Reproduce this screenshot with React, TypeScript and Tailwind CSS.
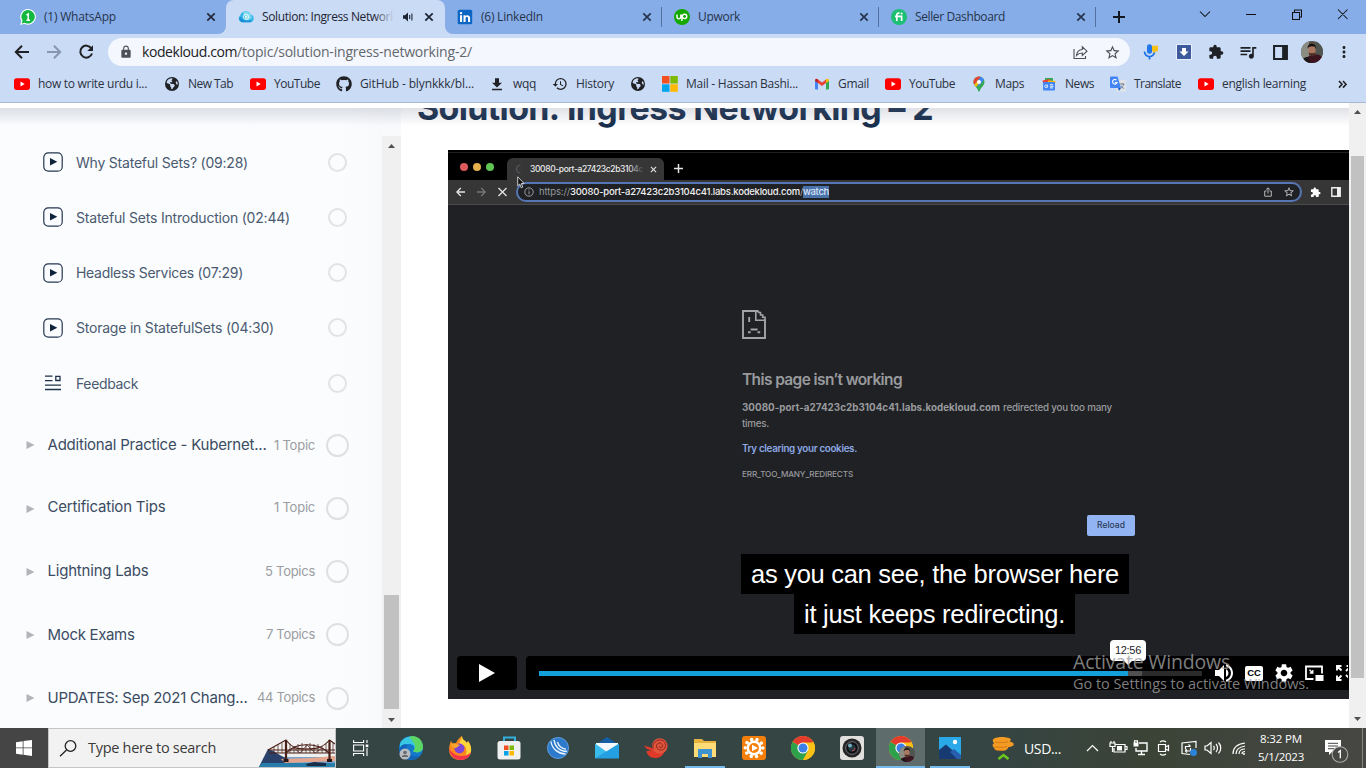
import { useLayoutEffect, useRef, useState } from "react";
import type { ReactNode } from "react";
import { MdExtension, MdHistory, MdLock, MdMoreVert, MdQueueMusic, MdSettings, MdStarOutline, MdVolumeUp } from "react-icons/md";
import { FaEarthAmericas, FaGithub } from "react-icons/fa6";

/* Single line of text whose tracking is adjusted so that it spans `w` pixels. */
function Fit({ w, children, className = "" }: { w: number; children: string; className?: string }) {
  const ref = useRef<HTMLSpanElement>(null);
  const [track, setTrack] = useState(0);
  useLayoutEffect(() => {
    if (ref.current) {
      const natural = ref.current.getBoundingClientRect().width;
      setTrack((w - natural) / children.length);
    }
  }, [w, children]);
  return (
    <span ref={ref} className={`inline-block shrink-0 whitespace-nowrap ${className}`} style={{ letterSpacing: track }}>
      {children}
    </span>
  );
}

/* ---------- browser chrome icons ---------- */

function Cross({ className = "", size = "h-[10px] w-[10px]" }: { className?: string; size?: string }) {
  return (
    <svg className={`shrink-0 ${size} ${className}`} viewBox="0 0 10 10" fill="none" stroke="currentColor" strokeWidth="1.7">
      <path d="M1.3 1.3l7.4 7.4M8.7 1.3L1.3 8.7" />
    </svg>
  );
}

const YouTube = () => (
  <svg className="h-4 w-4" viewBox="0 0 16 16">
    <rect x="0" y="2.3" width="16" height="11.6" rx="2.6" fill="#f00" />
    <path d="M6.5 5.6v5l4.2-2.5z" fill="#fff" />
  </svg>
);

const Download = () => (
  <svg className="h-4 w-4" viewBox="0 0 16 16" fill="#202124">
    <path d="M6 2.3h4v4.4h3L8 11.5 3 6.700h3zM3 12.700h10v1.500H3z" />
  </svg>
);

const Microsoft = () => (
  <svg className="h-4 w-4" viewBox="0 0 16 16">
    <path d="M0 0h7.500v7.500H0z" fill="#f25022" />
    <path d="M8.300 0h7.500v7.500H8.300z" fill="#7fba00" />
    <path d="M0 8.300h7.500v7.500H0z" fill="#00a4ef" />
    <path d="M8.300 8.300h7.500v7.500H8.300z" fill="#ffb900" />
  </svg>
);

const Gmail = () => (
  <svg className="h-4 w-4" viewBox="0 0 16 16">
    <path d="M1 4.300l3 2.200v7H2a1 1 0 01-1-1z" fill="#4285f4" />
    <path d="M12 6.500l3-2.200v8.200a1 1 0 01-1 1h-2z" fill="#34a853" />
    <path d="M4 3.600l4 3 4-3v3.500l-4 3-4-3z" fill="#ea4335" />
    <path d="M1 4.200C1 2.600 2.700 2.200 4 3.200v3.900L1 5z" fill="#c5221f" />
    <path d="M15 4.200c0-1.600-1.700-2-3-1v3.900L15 5z" fill="#fbbc04" />
  </svg>
);

const Maps = () => (
  <svg className="h-4 w-4" viewBox="0 0 16 16">
    <path d="M8 .5A5.500 5.500 0 002.500 6c0 4 3.700 4.700 5 9.500h1c1.300-4.800 5-5.500 5-9.500A5.500 5.500 0 008 .5z" fill="#34a853" />
    <path d="M3.700 2.500L6.500 5 3.300 8.800A5.500 5.500 0 013.700 2.500z" fill="#ea4335" />
    <path d="M8 .5a5.500 5.500 0 00-4.300 2L6.500 5l3.300-4.200z" fill="#ea4335" />
    <path d="M9.800.8a5.500 5.500 0 013.200 3L8 10 3.300 8.800 6.500 5z" fill="#4285f4" />
    <path d="M3.300 8.800L6.500 5l2 2-3.500 4z" fill="#fbbc04" />
    <circle cx="8" cy="6" r="2" fill="#fff" />
  </svg>
);

const News = () => (
  <svg className="h-4 w-4" viewBox="0 0 16 16">
    <path d="M4 2h8v5H4z" fill="#34a853" />
    <path d="M1.500 4.500L9 3l1 4H2z" fill="#ea4335" />
    <path d="M7 4.500l7.500.5-.5 3H7z" fill="#fbbc04" />
    <rect x="2" y="6" width="12" height="8.500" rx="1" fill="#4285f4" />
    <path d="M7 9.200H5.500a1.300 1.300 0 100 2.300c.9 0 1.300-.5 1.300-1.200H5.500M9 8.700h3M9 10.300h3.500M9 11.900h3" stroke="#fff" strokeWidth=".9" fill="none" />
  </svg>
);

const Translate = () => (
  <svg className="h-4 w-4" viewBox="0 0 16 16">
    <rect x="6" y="4" width="10" height="11.500" rx="1" fill="#dfe3e8" />
    <path d="M1 .5h6.500L11 12H1a1 1 0 01-1-1V1.500A1 1 0 011 .5z" fill="#4285f4" />
    <path d="M6.600 4.200a2.300 2.300 0 10.500 2.300H4.900" stroke="#fff" strokeWidth="1.100" fill="none" />
    <path d="M8 12h3l-2 3z" fill="#1a5fd0" />
    <path d="M9.800 8h4.700M12.200 7v1M13.700 8c-.4 2-1.600 3.500-3 4.500M11 9.500c.5 1.300 1.700 2.500 3 3" stroke="#6b7a8c" strokeWidth=".9" fill="none" />
  </svg>
);

const WhatsApp = () => (
  <svg className="h-4 w-4" viewBox="0 0 16 16">
    <path d="M8.200 0a7.800 7.800 0 11-3.800 14.700L.2 16l1.200-4A7.900 7.900 0 018.200 0z" fill="#fff" />
    <path d="M8.200 1.100a6.700 6.700 0 11-3.300 12.600l-3.200.9.900-3A6.700 6.700 0 018.200 1.100z" fill="#12b83f" />
    <path d="M6.500 6.200L8.200 5v6.200M6.400 11.200h3.700" stroke="#fff" strokeWidth="1.500" fill="none" />
  </svg>
);

const KodeKloud = () => (
  <svg className="h-4 w-4" viewBox="0 0 16 16">
    <path d="M4 13.200A3.700 3.700 0 012.300 6.500 5.500 5.500 0 0112.700 5.600 3.900 3.900 0 0112.500 13.200z" fill="#35b5e8" />
    <path d="M5 3.200a5.500 5.500 0 017.700 2.400L14 9 8 12.500z" fill="#7edbef" />
    <path d="M2 7.500c2 3.500 7 5 12 3.500l-1.500 2.200H4A3.700 3.700 0 012 7.500z" fill="#188fd8" />
    <circle cx="8" cy="7.800" r="2.600" fill="none" stroke="#e4f8ff" strokeWidth="1" />
    <circle cx="8" cy="7.800" r="1" fill="#fff" />
  </svg>
);

const LinkedIn = () => (
  <svg className="h-4 w-4" viewBox="0 0 16 16">
    <rect x=".7" y=".8" width="14.500" height="14.500" rx="1.500" fill="#0a66c2" />
    <path d="M3 6.300h2.100v6.600H3zM6.500 6.300h2v1c.9-1.600 4.600-1.700 4.600 1.700v3.900H11V9.500c0-2-2.400-1.800-2.400 0v3.400H6.500z" fill="#fff" />
    <circle cx="4.050" cy="4.100" r="1.200" fill="#fff" />
  </svg>
);

const Upwork = () => (
  <svg className="h-4 w-4" viewBox="0 0 16 16">
    <circle cx="8" cy="8" r="8" fill="#14a800" />
    <path d="M3 5.500v2.300a1.900 1.900 0 003.800 0V5.500c1 2.500 2 4 3.800 4.100a2.200 2.200 0 10-2.200-2.400L7.700 12" fill="none" stroke="#fff" strokeWidth="1.400" />
  </svg>
);

const Fiverr = () => (
  <svg className="h-4 w-4" viewBox="0 0 16 16">
    <circle cx="8" cy="8" r="8" fill="#1dbf73" />
    <path d="M5.800 12V6.200c0-1.700.9-2.200 2.700-2M4 7.300h6.600V12" fill="none" stroke="#fff" strokeWidth="1.700" />
    <circle cx="10.600" cy="4.500" r="1" fill="#fff" />
  </svg>
);

function Avatar({ className }: { className: string }) {
  return (
    <svg className={className} viewBox="0 0 22 22">
      <defs>
        <clipPath id="face"><circle cx="11" cy="11" r="11" /></clipPath>
      </defs>
      <g clipPath="url(#face)">
        <path d="M0 0h22v22H0z" fill="#55544b" />
        <path d="M0 0h8v22H0z" fill="#8b8c82" />
        <path d="M15 0h7v14h-7z" fill="#4f5650" />
        <path d="M3 22c0-5 3-7 7-7 6-3 11-1 12 3v4z" fill="#3c1520" />
        <path d="M1 22c0-4 2-6 6-6l3 6z" fill="#1b1719" />
        <ellipse cx="11" cy="9.500" rx="3.700" ry="5.500" fill="#a87862" />
        <path d="M6.500 7.500c-.5-6.500 9-6.500 8.700.5L14 5.800c-2-.8-4-.8-6 0z" fill="#17120f" />
        <path d="M7.600 11.500c1 1 5.500 1 6.800 0-.4 5-6 5-6.800 0z" fill="#4a2b24" />
      </g>
    </svg>
  );
}

/* ---------- tab strip ---------- */

function Tab({ icon, title, w }: { icon: ReactNode; title: string; w: number }) {
  return (
    <div className="flex h-full w-[217px] shrink-0 items-center pl-[12px]">
      {icon}
      <Fit w={w} className="ml-[8px]">{title}</Fit>
      <Cross className="mr-[9px] ml-auto" />
      <span className="h-5 w-px bg-[#54709f]" />
    </div>
  );
}

function TabStrip() {
  return (
    <div className="flex h-[34px] bg-[#86ade8] text-[12px] text-[#26344c]">
      <div className="flex h-full w-[226px] shrink-0 items-center pl-5">
        <WhatsApp />
        <Fit w={72} className="ml-2">(1) WhatsApp</Fit>
        <Cross className="mr-[10px] ml-auto text-[#222a3a]" />
      </div>
      <div className="relative flex h-full w-[219px] shrink-0 items-center rounded-t-lg bg-[#cadbf5] pl-[12px] text-[#1d2433]">
        <svg className="absolute bottom-0 -left-2 h-2 w-2" viewBox="0 0 8 8"><path d="M8 0v8H0a8 8 0 008-8z" fill="#cadbf5" /></svg>
        <svg className="absolute -right-2 bottom-0 h-2 w-2" viewBox="0 0 8 8"><path d="M0 0v8h8a8 8 0 01-8-8z" fill="#cadbf5" /></svg>
        <KodeKloud />
        <div className="relative ml-2 w-[132px] overflow-hidden">
          <Fit w={134}>Solution: Ingress Network</Fit>
          <span className="absolute inset-y-0 right-0 w-5 bg-gradient-to-r from-transparent to-[#cadbf5]" />
        </div>
        <svg className="ml-[9px] h-[10px] w-[10px]" viewBox="0 0 10 10" fill="#1d2433">
          <path d="M0 3.200h2L5 .5v9L2 6.800H0z" />
          <path d="M6.700 3v4M8.900 1.500v7" stroke="#1d2433" strokeWidth="1.100" />
        </svg>
        <Cross className="ml-[11px]" />
      </div>
      <Tab icon={<LinkedIn />} title="(6) LinkedIn" w={62} />
      <Tab icon={<Upwork />} title="Upwork" w={42} />
      <Tab icon={<Fiverr />} title="Seller Dashboard" w={90} />
      <svg className="mt-[11px] ml-[17px] h-3 w-3" viewBox="0 0 12 12" stroke="#15191f" strokeWidth="2"><path d="M6 0v12M0 6h12" /></svg>
      <svg className="mt-[8px] ml-[69px] h-3 w-[160px]" viewBox="0 0 160 12" fill="none" stroke="#111" strokeWidth="1.050">
        <path d="M6 3.500l5 5 5-5M52 6.500h10M98.500 4.500h7v7h-7zM100.500 4.500v-2.500h7v7h-2.300M144 1.500l9.500 9.500M153.500 1.500L144 11" />
      </svg>
    </div>
  );
}

/* ---------- address row ---------- */

function AddressRow() {
  return (
    <div className="flex h-9 items-center bg-[#cadbf5]">
      <svg className="ml-[14px] h-4 w-[82px] shrink-0" viewBox="0 0 82 16" fill="none" strokeWidth="2">
        <path d="M15 8H2M8 1.800L1.800 8 8 14.200" stroke="#202124" />
        <path d="M33 8h13M40 1.800L46.200 8 40 14.200" stroke="#8795ae" />
        <path d="M77.300 4.300A6 6 0 1078 9.500" stroke="#202124" />
        <path d="M79 1.300v5.700h-5.700z" fill="#202124" />
      </svg>
      <div className="ml-[12px] flex h-7 w-[1022px] shrink-0 items-center rounded-full bg-[#f4f7fd]">
        <MdLock className="ml-[11px] h-[14px] w-[14px] text-[#4d5156]" />
        <div className="mb-[2px] ml-[9px] flex text-[14px]">
          <Fit w={95} className="text-[#202124]">kodekloud.com</Fit>
          <Fit w={235} className="text-[#63676d]">/topic/solution-ingress-networking-2/</Fit>
        </div>
        <svg className="mr-[16px] ml-auto h-[15px] w-[15px]" viewBox="0 0 15 15" fill="none" stroke="#4d5156" strokeWidth="1.100">
          <path d="M1 4v9.500h11.500V11" />
          <path d="M3.500 10.500C4 6.500 6 4.700 9.300 4.500V1.800L14 6.200l-4.700 4.300V8C6.500 8 5 8.700 3.500 10.500z" />
        </svg>
        <MdStarOutline className="mr-[9px] h-[17px] w-[17px] text-[#4d5156]" />
      </div>
      <svg className="ml-[13px] h-4 w-4 shrink-0" viewBox="0 0 16 16">
        <path d="M1.500 7.500a5 5 0 0010 0M6.500 12.500v3" fill="none" stroke="#1a73e8" strokeWidth="1.700" />
        <rect x="4" y=".2" width="5" height="9.600" rx="2.500" fill="#2277ea" />
        <path d="M9 1.800h6v5.500h-2.200L10.500 9.500V7.300H9z" fill="#fbc117" />
      </svg>
      <svg className="ml-[17px] h-4 w-4 shrink-0" viewBox="0 0 16 16">
        <rect x=".5" y=".5" width="15" height="15" fill="#3d5a9c" stroke="#e9effa" />
        <path d="M6 4h4v3.500h2.500L8 12 3.500 7.500H6z" fill="#fff" />
      </svg>
      <MdExtension className="ml-4 h-4 w-4 shrink-0 text-[#1d2025]" />
      <MdQueueMusic className="ml-[14px] h-5 w-5 shrink-0 text-[#1d2025]" />
      <svg className="ml-[15px] h-[15px] w-[15px] shrink-0" viewBox="0 0 14 14"><path d="M1 1h12v12H1z" fill="none" stroke="#1d2025" strokeWidth="1.900" /><path d="M8.500 1H13v12H8.500z" fill="#1d2025" /></svg>
      <Avatar className="ml-[13px] h-[22px] w-[22px] shrink-0" />
      <MdMoreVert className="ml-[12px] h-[18px] w-[18px] shrink-0 text-[#1d2025]" />
    </div>
  );
}

/* ---------- bookmarks ---------- */

type Mark = { icon: ReactNode; label?: string; w?: number; cell: string };
const globe = <FaEarthAmericas className="h-[14px] w-[14px] text-[#202124]" />;
const marks: Mark[] = [
  { icon: <YouTube />, label: "how to write urdu i...", w: 109, cell: "w-[150px]" },
  { icon: globe, label: "New Tab", w: 45, cell: "w-[86px]" },
  { icon: <YouTube />, label: "YouTube", w: 46, cell: "w-[86px]" },
  { icon: <FaGithub className="h-4 w-4 text-[#202124]" />, label: "GitHub - blynkkk/bl...", w: 114, cell: "w-[153px]" },
  { icon: <Download />, label: "wqq", w: 23, cell: "w-[63px]" },
  { icon: <MdHistory className="h-4 w-4 text-[#202124]" />, label: "History", w: 38, cell: "w-[78px]" },
  { icon: globe, cell: "w-[32px]" },
  { icon: <Microsoft />, label: "Mail - Hassan Bashi...", w: 112, cell: "w-[152px]" },
  { icon: <Gmail />, label: "Gmail", w: 31, cell: "w-[71px]" },
  { icon: <YouTube />, label: "YouTube", w: 46, cell: "w-[86px]" },
  { icon: <Maps />, label: "Maps", w: 29, cell: "w-[70px]" },
  { icon: <News />, label: "News", w: 29, cell: "w-[69px]" },
  { icon: <Translate />, label: "Translate", w: 47, cell: "w-[88px]" },
  { icon: <YouTube />, label: "english learning", w: 84, cell: "w-[140px]" },
];

function Bookmarks() {
  return (
    <div className="flex h-[33px] items-start border-b border-[#a9b8d3] bg-[#cadbf5] pt-[6px] pl-[14px] text-[12px] text-[#2a3242]">
      {marks.map((m, i) => (
        <div key={i} className={`flex h-4 shrink-0 items-center ${m.cell}`}>
          <span className="flex w-4 shrink-0 justify-center">{m.icon}</span>
          {m.label && <Fit w={m.w ?? 0} className="ml-2">{m.label}</Fit>}
        </div>
      ))}
      <svg className="mt-[4px] h-[9px] w-[9px]" viewBox="0 0 9 9" fill="none" stroke="#202124" strokeWidth="1.600"><path d="M1 1l3 3.300-3 3.300M5 1l3 3.300-3 3.300" /></svg>
    </div>
  );
}

/* ---------- course sidebar ---------- */

const lessons = [
  { label: "Why Stateful Sets? (09:28)", w: 172 },
  { label: "Stateful Sets Introduction (02:44)", w: 214 },
  { label: "Headless Services (07:29)", w: 167 },
  { label: "Storage in StatefulSets (04:30)", w: 198 },
  { label: "Feedback", w: 62, form: true },
];
const sections = [
  { label: "Additional Practice - Kubernet...", w: 219, count: "1 Topic", cw: 41, lift: "pb-0" },
  { label: "Certification Tips", w: 118, count: "1 Topic", cw: 41, lift: "pb-[2px]" },
  { label: "Lightning Labs", w: 101, count: "5 Topics", cw: 50, lift: "pb-0" },
  { label: "Mock Exams", w: 87, count: "7 Topics", cw: 49, lift: "pb-0" },
  { label: "UPDATES: Sep 2021 Chang...", w: 200, count: "44 Topics", cw: 58, lift: "pb-0" },
];

function Sidebar() {
  return (
    <aside className="flex h-full w-[401px] shrink-0 bg-[#f8fafc] font-['Inter',sans-serif]">
      <div className="w-[382px] shrink-0 overflow-hidden bg-linear-to-r from-[#fafcfe] from-90% to-[#f8f9fb] pt-[26.500px]">
        {lessons.map((l) => (
          <div key={l.label} className="flex h-[55.250px] items-center pl-[43px] text-[14px] text-[#4a5a70]">
            {l.form ? (
              <svg className="h-5 w-5" viewBox="0 0 20 20" fill="none" stroke="#1d3049" strokeWidth="1.300"><path d="M2 3.200h7.500M2 7.700h7.500M2 12.200h16M2 16.500h16M12.800 3.300h4.200v4.200h-4.200z" /></svg>
            ) : (
              <svg className="h-5 w-5" viewBox="0 0 20 20"><rect x=".8" y=".8" width="18.400" height="18.400" rx="4.500" fill="none" stroke="#253750" strokeWidth="1.200" /><path d="M7 6l7.300 3.800L7 13.600z" fill="#10233d" /></svg>
            )}
            <Fit w={l.w} className="ml-[13px]">{l.label}</Fit>
            <span className="mr-[35px] ml-auto h-[19px] w-[19px] rounded-full border-2 border-[#e1e3e5]" />
          </div>
        ))}
        <div className="pt-[3px]">
          {sections.map((s) => (
            <div key={s.label} className="flex h-[63.200px] items-center pl-[26px] text-[15px] text-[#3a4b62]">
              <svg className="h-[10px] w-[9px]" viewBox="0 0 9 10"><path d="M.5 1l8 4-8 4z" fill="#b2b4b7" /></svg>
              <Fit w={s.w} className={`ml-[12.500px] ${s.lift}`}>{s.label}</Fit>
              <Fit w={s.cw} className={`ml-auto text-[13px] text-[#9b9da1] ${s.lift}`}>{s.count}</Fit>
              <span className="mr-[33px] ml-[11px] h-[23px] w-[23px] shrink-0 rounded-full border-2 border-[#dfe0e2]" />
            </div>
          ))}
        </div>
      </div>
      <div className="mt-7 flex w-[19px] flex-col items-center bg-[#f0f0f0]">
        <svg className="mt-[8px] h-[4px] w-[7px]" viewBox="0 0 7 4"><path d="M0 4L3.500 0 7 4z" fill="#505050" /></svg>
        <div className="mt-auto h-[114px] w-[15px] bg-[#c1c1c1]" />
        <svg className="mt-[9px] mb-[6px] h-[4px] w-[7px]" viewBox="0 0 7 4"><path d="M0 0h7L3.500 4z" fill="#505050" /></svg>
      </div>
    </aside>
  );
}

/* ---------- video ---------- */

function VideoBrowser() {
  return (
    <>
      <div className="h-[2px] bg-black" />
      <div className="flex h-7 border-t border-[#1f1f1f] bg-black text-[#ddd]">
        <div className="mt-[10px] ml-[12px] flex gap-[5px]">
          <span className="h-2 w-2 rounded-full bg-[#dd5a5c]" />
          <span className="h-2 w-2 rounded-full bg-[#e5b14f]" />
          <span className="h-2 w-2 rounded-full bg-[#5fc454]" />
        </div>
        <div className="mt-[5px] ml-[13px] flex h-[22px] w-[157px] items-center rounded-t-md bg-[#363637]">
          <svg className="ml-2 h-[10px] w-[10px]" viewBox="0 0 10 10" fill="none" stroke="#5c5c66" strokeWidth="1"><path d="M5.500 1a4 4 0 000 8" /></svg>
          <div className="relative ml-[5px] flex h-[12px] w-[114px] items-center overflow-hidden leading-[12px]">
            <Fit w={113} className="text-[8.500px] font-medium text-[#ececec]">30080-port-a27423c2b3104c</Fit>
            <span className="absolute inset-y-0 right-0 w-4 bg-linear-to-r from-transparent to-[#363637]" />
          </div>
          <Cross className="ml-[6px]" size="h-[7px] w-[7px]" />
        </div>
        <svg className="mt-[11px] ml-[10px] h-[9px] w-[9px]" viewBox="0 0 8 8" stroke="#e5e5e5" strokeWidth="1.300"><path d="M4 0v8M0 4h8" /></svg>
      </div>
      <div className="flex h-[25px] items-center border-b border-[#4b4b4c] bg-[#363637]">
        <svg className="ml-[8px] h-[10px] w-[52px]" viewBox="0 0 52 10" fill="none" strokeWidth="1.300">
          <path d="M9 5H1M4.800 1L.8 5l4 4" stroke="#e5e5e5" />
          <path d="M21 5h8M25.200 1l4 4-4 4" stroke="#777" />
          <path d="M42.500 1l8 8M50.500 1l-8 8" stroke="#e5e5e5" />
        </svg>
        <div className="ml-[8px] flex h-5 w-[786px] shrink-0 items-center rounded-full border-2 border-[#5676b5] bg-[#202124] text-[9.500px]">
          <svg className="ml-[6px] h-[10px] w-[10px]" viewBox="0 0 10 10" fill="none" stroke="#aaa" strokeWidth=".9"><circle cx="5" cy="5" r="4.200" /><path d="M5 4.300v3M5 2.400v1" /></svg>
          <Fit w={31} className="ml-[5px] text-[#96999d]">https://</Fit>
          <Fit w={230} className="font-medium text-[#f0f0f0]">30080-port-a27423c2b3104c41.labs.kodekloud.com</Fit>
          <Fit w={3} className="text-[#aaa]">/</Fit>
          <span className="flex h-[12px] items-center bg-[#4a72ab]"><Fit w={26} className="font-medium text-[#d9e4f5]">watch</Fit></span>
          <svg className="ml-auto h-[10px] w-[8px]" viewBox="0 0 8 10" fill="none" stroke="#b5b5b5"><path d="M2.500 4H.7v5.200h6.600V4H5.500M4 6.500V1M2.200 2.500L4 .8l1.800 1.700" /></svg>
          <MdStarOutline className="mr-[5px] ml-[11px] h-[12px] w-[12px] text-[#c4c4c4]" />
        </div>
        <MdExtension className="ml-[8px] h-[11px] w-[11px] shrink-0 text-white" />
        <svg className="ml-[10px] h-[10px] w-[10px] shrink-0" viewBox="0 0 10 10"><path d="M.8.8h8.400v8.400H.8z" fill="none" stroke="#eee" strokeWidth="1.400" /><path d="M6 .8h3.200v8.400H6z" fill="#eee" /></svg>
      </div>
    </>
  );
}

function ErrorPage() {
  return (
    <div className="ml-[294px] flex w-[393px] flex-col pt-[105px] text-[#989a9d]">
      <svg className="h-[29px] w-6" viewBox="0 0 24 29" fill="none" stroke="#a3a4a6" strokeWidth="1.900">
        <path d="M16.500 1H1v27h22V9.500" />
        <path d="M13.800 1v9.300H24M16.500 1v1.500h2V5h2.200v2.200H23v2.500" strokeWidth="1.600" />
        <path d="M7.200 7v5M6 22.300h2.700M8.600 19.500h7M15.500 22.300h2.700" />
      </svg>
      <Fit w={160} className="mt-[31px] h-5 self-start text-[15.500px] leading-5 font-semibold">This page isn’t working</Fit>
      <div className="mt-[10px] h-[31px] text-[9.800px] leading-[15.500px]">
        <div className="flex h-[15.500px] gap-[3px]">
          <Fit w={258} className="font-bold">30080-port-a27423c2b3104c41.labs.kodekloud.com</Fit>
          <Fit w={109} className="font-medium">redirected you too many</Fit>
        </div>
        <Fit w={27} className="font-medium">times.</Fit>
      </div>
      <Fit w={115} className="mt-[11px] h-[14px] self-start text-[9.800px] leading-[14px] font-semibold text-[#8ca8e5]">Try clearing your cookies.</Fit>
      <Fit w={111} className="mt-[12px] h-[12px] self-start text-[8.200px] leading-[12px] font-medium">ERR_TOO_MANY_REDIRECTS</Fit>
      <div className="mt-[35px] flex h-[21px] w-12 items-center justify-center self-end rounded-[2px] bg-[#92b4f2] text-[8.500px] font-medium text-[#2c3b5b]">
        <Fit w={28}>Reload</Fit>
      </div>
    </div>
  );
}

function PlayerControls() {
  return (
    <div className="absolute bottom-[9px] left-[9px] flex h-[34px] w-[892px] gap-[9px]">
      <div className="flex w-[60px] shrink-0 items-center justify-center rounded bg-black">
        <svg className="h-[18px] w-4" viewBox="0 0 16 18"><path d="M0 0l16 9-16 9z" fill="#fff" /></svg>
      </div>
      <div className="flex flex-1 items-center rounded-l bg-black pl-[13px]">
        <div className="relative flex h-[5px] w-[663px] shrink-0 bg-[#2b2b2b]">
          <div className="h-full w-[589px] bg-[#139fda]" />
          <div className="h-full w-[14px] bg-[#505050]" />
          <div className="absolute -top-[31px] left-[571px] flex h-[21px] w-9 items-center justify-center rounded bg-white text-[11px] text-[#222]">
            <Fit w={26} className="font-['Liberation_Sans',sans-serif]">12:56</Fit>
            <svg className="absolute top-full left-[14px] h-[4px] w-2" viewBox="0 0 8 4"><path d="M0 0h8L4 4z" fill="#fff" /></svg>
          </div>
        </div>
        <MdVolumeUp className="ml-[10px] h-6 w-6 shrink-0 text-white" />
        <div className="ml-[9px] flex h-[15px] w-[18px] shrink-0 items-center justify-center rounded-[2px] bg-white font-['Liberation_Sans',sans-serif] text-[9.500px] leading-none font-bold text-black">CC</div>
        <MdSettings className="ml-[10px] h-[22px] w-[22px] shrink-0 text-white" />
        <svg className="ml-[10px] h-[17px] w-[19px] shrink-0" viewBox="0 0 19 16" fill="none" stroke="#fff" strokeWidth="1.800">
          <path d="M8.500 13.500H1V1h16v7" /><path d="M10.500 9.500h8v6h-8z" fill="#fff" stroke="none" /><path d="M4.500 4.200l3 3M7.800 4.500v3h-3" strokeWidth="1.300" />
        </svg>
        <svg className="ml-[12px] h-4 w-[12px] shrink-0" viewBox="0 0 12 16" fill="none" stroke="#fff" strokeWidth="1.900">
          <path d="M1 5.500V1h4.500M1 1l4.500 4.500M1 10.500V15h4.500M1 15l4.500-4.500M10.500 1H14M10 6l5-5M10 10l5 5" />
        </svg>
      </div>
    </div>
  );
}

function Captions() {
  return (
    <div className="absolute top-[404px] left-[293px] flex w-[388px] flex-col font-['Liberation_Sans',sans-serif] text-[25.500px] leading-10 text-white">
      <div className="flex h-10 w-full justify-center bg-black"><Fit w={368}>as you can see, the browser here</Fit></div>
      <div className="ml-[53px] flex h-10 w-[281px] justify-center bg-black"><Fit w={261}>it just keeps redirecting.</Fit></div>
    </div>
  );
}

function Video() {
  return (
    <div className="relative ml-[47px] flex h-[549px] w-[901px] flex-col overflow-hidden bg-[#202124] font-['Inter',sans-serif]">
      <VideoBrowser />
      <ErrorPage />
      <Captions />
      <PlayerControls />
      <svg className="absolute top-[26px] left-[69px] h-[13px] w-2" viewBox="0 0 8 13"><path d="M.7.800v9l2-1.800 1.500 3.800 1.500-.700L4.300 7.500H7.200z" fill="#111" stroke="#ddd" strokeWidth=".9" /></svg>
      <div className="absolute top-[500px] left-[625px] flex flex-col items-start font-['Open_Sans',sans-serif] text-[#a0a0a0]/80">
        <Fit w={157} className="h-6 text-[19.500px] leading-6">Activate Windows</Fit>
        <Fit w={236} className="h-5 text-[14.500px] leading-5">Go to Settings to activate Windows.</Fit>
      </div>
    </div>
  );
}

function Page() {
  return (
    <div className="flex h-[625px] bg-white">
      <div className="relative flex w-[1349px] flex-col overflow-hidden">
        <div className="h-[5px] shrink-0 bg-white" />
        <div className="relative flex h-[620px] overflow-hidden">
          <Sidebar />
          <main className="flex-1">
            <div className="flex h-[42px] items-start overflow-hidden pl-[16px]">
              <Fit w={516} className="-mt-[20px] font-['Inter',sans-serif] text-[34px] leading-[40px] font-bold text-[#162d4b]">Solution: Ingress Networking – 2</Fit>
            </div>
            <Video />
          </main>
          <div className="absolute inset-x-0 top-0 h-[18px] bg-linear-to-b from-[#747a90]/22 to-transparent" />
        </div>
      </div>
      <div className="flex w-[17px] flex-col items-center bg-[#f0f0f0]">
        <svg className="mt-[7px] h-[4px] w-[7px]" viewBox="0 0 7 4"><path d="M0 4L3.500 0 7 4z" fill="#505050" /></svg>
        <div className="mt-[42px] h-[522px] w-[13px] bg-[#c1c1c1]" />
        <svg className="mt-[39px] h-[4px] w-[7px]" viewBox="0 0 7 4"><path d="M0 0h7L3.500 4z" fill="#505050" /></svg>
      </div>
    </div>
  );
}

/* ---------- taskbar ---------- */

const Bridge = () => (
  <svg className="h-[28px] w-[76px] shrink-0 self-end" viewBox="0 0 76 28">
    <path d="M0 28L9 10h67v18z" fill="#7ba3ca" />
    <path d="M9 10h67v8H5z" fill="#edf0ef" />
    <path d="M7 9V0h69v11H9z" fill="#f2f2f2" />
    <path d="M9 10c10 3 14 10 26 11L24 28H0z" fill="#29416b" />
    <path d="M22 20l30-1 24-2v5l-50 2z" fill="#e6a58d" />
    <path d="M0 28l3-4h73v4z" fill="#277eab" />
    <path d="M47 25l8-2 12 1v3H48z" fill="#192c48" />
    <g fill="none" stroke="#4b2019" strokeWidth="1.100">
      <path d="M27 1v20M70.500 1v20" strokeWidth="2.200" />
      <path d="M9 11h67M10 14h66" />
      <path d="M9 11L27 1c7 9 12 9 20 9s16 0 23.500-9L76 5" />
      <path d="M27 14c10-11 31-11 43 0" />
      <path d="M15 8v6M19 6v8M23 4v10M31 5v9M35 8v6M39 5v9M43 4v10M47 5v9M51 4v10M55 5v9M59 5v9M63 7v7M67 5v9M74 4v10M27 14l8-5 6 5 7-8 8 8 7-5 8 5" strokeWidth=".7" />
    </g>
    <path d="M24.500 20h5v3h-5zM68 20h5v3h-5z" fill="#26171b" />
  </svg>
);

const Chrome = () => (
  <svg className="h-6 w-6" viewBox="0 0 24 24">
    <circle cx="12" cy="12" r="12" fill="#fbc116" />
    <path d="M12 12L1.600 6A12 12 0 0122.400 6z" fill="#e33b2e" />
    <path d="M1.600 6a12 12 0 0010.400 18l5.200-9L12 12z" fill="#2da14c" />
    <path d="M12 6.500h10.700A12 12 0 0112 24l5-9z" fill="#fbc116" />
    <circle cx="12" cy="12" r="5.600" fill="#fff" />
    <circle cx="12" cy="12" r="4.500" fill="#3c7fe8" />
  </svg>
);

const apps: ReactNode[] = [
  <svg className="h-6 w-6" viewBox="0 0 24 24">
    <circle cx="12" cy="12" r="12" fill="#1579cb" />
    <path d="M1 8C4-2 23-3 24 11c0 5-6 7-10 4 3-2 1-7-3-7-5 0-9 0-10 6z" fill="#38c6e0" />
    <path d="M13 0c7 0 11 5 11 11 0 5-6 7-10 4 5-4 0-10-4-14z" fill="#5cd665" />
    <path d="M8 9c-3 6 1 12 12 11-6 7-20 4-19.700-6C1 9 5 7.500 8 9z" fill="#1363b8" />
    <circle cx="6" cy="18" r="5.500" fill="#b9bcc0" /><circle cx="6" cy="16.500" r="1.800" fill="#666b70" /><path d="M2.800 21c0-3 6.400-3 6.400 0z" fill="#666b70" />
  </svg>,
  <svg className="h-6 w-6" viewBox="0 0 24 24">
    <path d="M3 5l2 3 3-1c2-4 4-6 6-7 0 4 3 4 5 7l1-2c6 8 3 19-8 19S-1 14 3 5z" fill="#ff8a1c" />
    <path d="M14 0c0 4 3 4 5 7l1-2c6 8 3 17-5 18 6-6 4-15-4-15z" fill="#ffd53c" />
    <path d="M1 12c1 8 6 12 12 12 5 0 9-3 10-8-5 6-17 6-22-4z" fill="#f4364c" />
    <circle cx="11.500" cy="12.500" r="5" fill="#7d45d8" /><path d="M3 8c3-2 6 0 9 1l-4 3c-3 0-4-1-5-4z" fill="#ffa62b" />
  </svg>,
  <svg className="h-6 w-6" viewBox="0 0 24 24">
    <path d="M7 6V1.500h11V6" fill="none" stroke="#32b0de" strokeWidth="2" />
    <rect x=".5" y="5" width="23" height="18.500" rx="2.500" fill="#f0f0f0" />
    <path d="M7 9.500h4.500V14H7z" fill="#f04f24" /><path d="M12.500 9.500H17V14h-4.500z" fill="#7eb900" /><path d="M7 15h4.500v4.500H7z" fill="#0ba2ea" /><path d="M12.500 15H17v4.500h-4.500z" fill="#fdb901" />
  </svg>,
  <svg className="h-[22px] w-[22px]" viewBox="0 0 22 22">
    <circle cx="11" cy="11" r="10.500" fill="#2d79cb" stroke="#5da0df" />
    <path d="M4 4.500c1 7.500 7 12 14.500 12.500M7 2.800c1 7.200 6 11.200 13 11.700M10.500 5c1 4 4 6.500 8.500 7.200" fill="none" stroke="#e8f2fb" strokeWidth="1.300" />
  </svg>,
  <svg className="h-6 w-6" viewBox="0 0 24 24">
    <path d="M0 9l12-8 12 8v13H0z" fill="#155fa6" /><path d="M1 7h22v9H1z" fill="#f4f8fa" />
    <path d="M0 7.500l12 8.500L0 22.500z" fill="#3abbed" /><path d="M24 7.500L0 22.500h24z" fill="#24a0e2" />
  </svg>,
  <svg className="h-6 w-6" viewBox="0 0 24 24">
    <path d="M0 9.500c3 1 6 1.500 9 3 2 4 8 5 12 1-1 6-5 8.500-10 8.500C6 22 3 19 2.500 15l5-.5C4 14 1 12 0 9.500z" fill="#df392a" />
    <circle cx="15.800" cy="10" r="7.800" fill="#e2553d" />
    <path d="M9 13C7 3 21.500.5 21.500 9.500c0 6-9 6-9 .5 0-4 6-4 6-.2 0 2.800-4 2.200-3 .2" fill="none" stroke="#8b2820" strokeWidth="1" />
  </svg>,
  <svg className="h-6 w-6" viewBox="0 0 24 24">
    <path d="M1 3h8l2 2h12v16H1z" fill="#e6b43e" /><path d="M1 7h22v14H1z" fill="#fddc78" />
    <path d="M5 13h14v9h-4v-4H9v4H5z" fill="#4093d1" />
  </svg>,
  <svg className="h-6 w-6" viewBox="0 0 24 24">
    <rect width="24" height="24" rx="3" fill="#f4800b" />
    <circle cx="12" cy="12" r="8.800" fill="none" stroke="#fff" strokeWidth="3.400" strokeLinecap="round" strokeDasharray="0.010 5.519" />
    <circle cx="12" cy="12" r="7.500" fill="#fff" /><circle cx="12" cy="12" r="5" fill="#f4800b" /><path d="M10 8.800l6 3.200-6 3.200z" fill="#fff" />
  </svg>,
  <Chrome />,
  <svg className="h-6 w-6" viewBox="0 0 24 24">
    <rect width="24" height="24" rx="3" fill="#e2e0dd" />
    <circle cx="12" cy="12" r="9.500" fill="#252426" /><circle cx="12" cy="12" r="6.300" fill="#0d1013" stroke="#77747a" strokeWidth="1" />
    <circle cx="12" cy="12" r="3.600" fill="#253943" /><circle cx="10" cy="9.500" r="2" fill="#77aebb" /><path d="M12 15a3 3 0 003-3" stroke="#b44" fill="none" />
  </svg>,
  <div className="relative"><Chrome /><Avatar className="absolute top-[10px] left-[10px] h-4 w-4" /></div>,
  <svg className="h-[22px] w-[22px]" viewBox="0 0 22 22">
    <path d="M0 0h22v22H0z" fill="#2aa9e9" /><path d="M0 13L7 7.500 22 21v1H0z" fill="#173a73" /><path d="M11 15l4-3 7 6v4h-4z" fill="#275fae" /><circle cx="16" cy="5" r="2.200" fill="#fff" />
  </svg>,
];
const appStates = ["", "", "", "", "", "", "open", "", "", "", "active", "open"];

function Taskbar() {
  return (
    <div className="flex h-10 overflow-hidden bg-linear-to-r from-[#354544] from-72% via-[#3b4336] via-84% to-[#474744] text-white">
      <div className="flex w-12 shrink-0 items-center justify-center bg-[#454545]">
        <svg className="h-4 w-4" viewBox="0 0 16 16" fill="#fff"><path d="M0 2.200L6.700 1.200v6.300H0zM7.500 1.100L16 0v7.500H7.500zM0 8.300h6.700v6.400L0 13.700zM7.500 8.300H16V16l-8.500-1.200z" /></svg>
      </div>
      <div className="flex w-[288px] shrink-0 items-center border border-[#c5c5c5] bg-[#f2f2f2] pl-[10px] text-[#3a3a3a]">
        <svg className="h-[17px] w-[18px]" viewBox="0 0 18 17" fill="none" stroke="#222" strokeWidth="1.300"><circle cx="11.500" cy="6" r="5.300" /><path d="M7.500 10L1 16.300" /></svg>
        <Fit w={128} className="mr-auto ml-[11px] text-[14.500px]">Type here to search</Fit>
        <Bridge />
      </div>
      <div className="flex w-[50px] shrink-0 items-center justify-center">
        <svg className="h-4 w-4" viewBox="0 0 16 16" fill="none" stroke="#fff" strokeWidth="1.100"><path d="M.6 0v2.500h10V0M.6 5h10v6H.6zM.6 16v-2.500h10V16M14 0v3M14 8v8" /><path d="M12.700 4.500h2.600v2.600h-2.600z" fill="#fff" stroke="none" /></svg>
      </div>
      {apps.map((app, i) => (
        <div key={i} className={appStates[i] === "active" ? "flex w-[49px] shrink-0 flex-col items-center bg-[#5f6c6c]" : "flex w-[49px] shrink-0 flex-col items-center"}>
          <div className="flex h-[38px] items-center pt-[2px]">{app}</div>
          {appStates[i] && <div className={appStates[i] === "active" ? "h-[2px] w-full bg-[#76b9ed]" : "h-[2px] w-10 bg-[#76b9ed]"} />}
        </div>
      ))}
      <svg className="mt-[9px] ml-[17px] h-[23px] w-[24px] shrink-0" viewBox="0 0 24 23">
        <path d="M3 1.500C7-.5 15-.5 19 1.500c1.500 1 .5 2.500-.5 3 3 .5 5 2 4 3.500s-3 2-5 2c-1 3-4 4-7 4s-8-.5-7-3c-2-1-3-4 0-5-2-1-2.500-3-.5-4.500z" fill="#f39a24" />
        <path d="M4 5c4 1 9 .8 13-.3M4 9.700c4 1 8 .8 12 0M6 13c2 .6 4 .6 6 0" stroke="#cf7710" fill="none" strokeWidth=".9" />
        <path d="M7.500 22l5-4 5 4" fill="none" stroke="#69c91c" strokeWidth="2.500" />
      </svg>
      <div className="flex w-[71px] shrink-0 items-center pl-[9px] text-[14px]"><Fit w={37}>USD...</Fit></div>
      <svg className="mt-3 h-4 w-[162px] shrink-0" viewBox="0 0 162 16" fill="none" stroke="#fff" strokeWidth="1.200">
        <path d="M1 11l5.500-5.500L12 11" />
        <path d="M29 4.500h10v7.500H28V8M39.500 6.500h1.500v3h-1.500M24 3h5v3.500h-5zM25 1v2M28 1v2M26.500 6.500V12" /><path d="M31 6h5v4.500h-5z" fill="#fff" stroke="none" />
        <path d="M53 3h8v8H50V8M55.500 11v3M52 14.500h7" strokeWidth="1.400" /><path d="M47.500 2.500h5V6.500h-5z" fill="#fff" stroke="none" /><path d="M48.500 3V.8h3V3" />
        <path d="M72.500 4.500h7v7h-7zM79.500 7l3-1.500v5l-3-1.500M74 2c2-1.500 4-1.500 6 0M74 14c2 1.500 4 1.500 6 0" />
        <path d="M110 8V1.500L96 3v10.500l8 1M99.500 9.500V6.500h5M104.500 6.500l-2-2M104.500 8v3h-4M101 9.500l-1.500 1.500 1.500 1.500" /><circle cx="107.500" cy="12.500" r="3.500" fill="#2d83d8" stroke="none" />
        <path d="M119 6h2l4-3.500v11L121 10h-2zM127.500 6c1 1 1 3 0 4M130 4c2 2 2 6 0 8M132.500 2.500c3 3 3 8 0 11" />
        <path d="M147 14c0-6 4-10 12-11M150 14c0-4 3-7 9-8M153 14c0-3 2-5 6-5M156 14c0-1.500 1-2.500 3-2.500" /><circle cx="158" cy="14" r="1" fill="#fff" stroke="none" />
      </svg>
      <div className="flex w-[66px] shrink-0 flex-col items-center pt-[2px] text-[11.500px] leading-[18px]">
        <Fit w={42}>8:32 PM</Fit>
        <Fit w={46}>5/1/2023</Fit>
      </div>
      <svg className="mt-[11px] ml-[10px] h-[25px] w-[25px] shrink-0" viewBox="0 0 25 25">
        <path d="M1 1h16v12H8l-3 3v-3H1z" fill="#fff" /><path d="M4 4.300h10M4 7h10M4 9.700h6" stroke="#474744" strokeWidth="1" />
        <circle cx="16" cy="15.500" r="7.800" fill="#474744" stroke="#aaa" strokeWidth="1.100" /><path d="M14 13.500l2.300-1.800v7.600" stroke="#fff" strokeWidth="1.300" fill="none" />
      </svg>
      <span className="ml-auto h-full w-px bg-[#85857f]" />
      <span className="w-[3px]" />
    </div>
  );
}

export default function App() {
  return (
    <div className="flex h-[768px] w-[1366px] flex-col overflow-hidden font-['Open_Sans','Noto_Sans',sans-serif]">
      <TabStrip />
      <AddressRow />
      <Bookmarks />
      <Page />
      <Taskbar />
    </div>
  );
}
